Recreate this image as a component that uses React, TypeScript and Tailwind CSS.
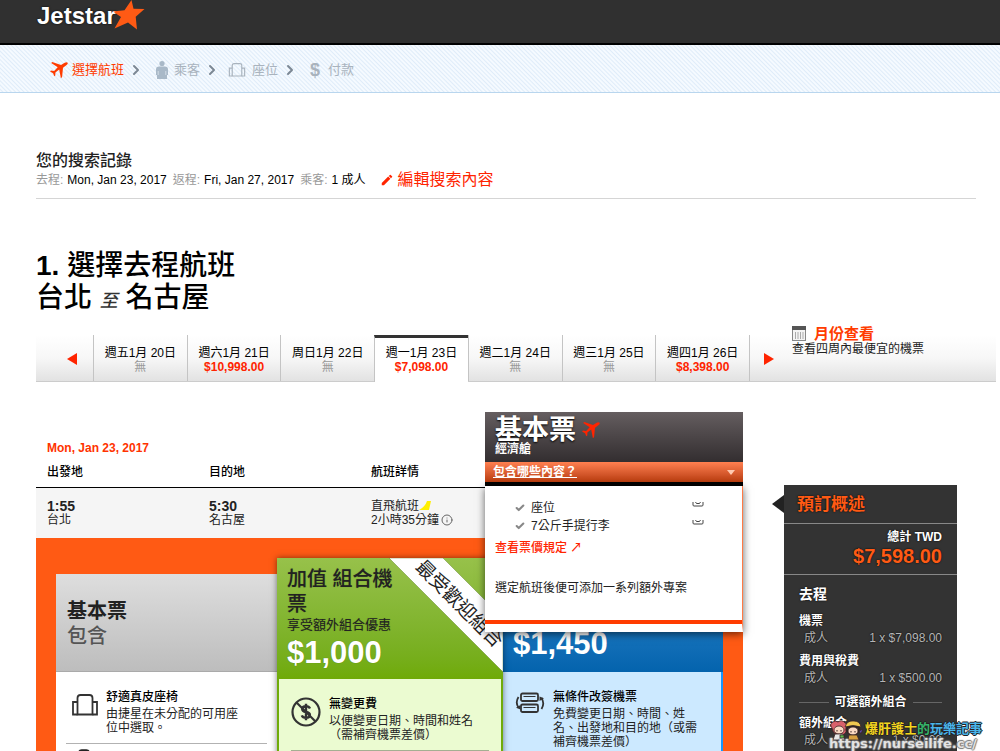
import React from "react";
import { ChevronRight, Info, Check, Briefcase } from "lucide-react";
import { MdEdit } from "react-icons/md";

const days = [
  { label: "週五1月 20日", price: null },
  { label: "週六1月 21日", price: "$10,998.00" },
  { label: "周日1月 22日", price: null },
  { label: "週一1月 23日", price: "$7,098.00", active: true },
  { label: "週二1月 24日", price: null },
  { label: "週三1月 25日", price: null },
  { label: "週四1月 26日", price: "$8,398.00" },
];

const summary = [
  ["去程:", "Mon, Jan 23, 2017"],
  ["返程:", "Fri, Jan 27, 2017"],
  ["乘客:", "1 成人"],
];

function SeatIcon({ className }: { className: string }) {
  return (
    <svg viewBox="0 0 26 22" className={className} fill="none" stroke="currentColor" strokeWidth="1.8">
      <path d="M5.500 20.500V4Q5.500 1 8.500 1h9q3 0 3 3v16.500z" />
      <path d="M5.500 8H1v12.500h4.500M20.500 8H25v12.500h-4.500" />
    </svg>
  );
}

function PersonIcon() {
  return (
    <svg viewBox="0 0 12 18" className="h-[18px] w-3 fill-[#a9b9c8]">
      <circle cx="6" cy="2.600" r="2.600" />
      <path d="M3 5.500h6q3 0 3 3v5.500h-1v4H1v-4H0V8.500q0-3 3-3z" />
      <path d="M2.200 10v4M9.800 10v4" stroke="#eef5fc" strokeWidth=".6" />
    </svg>
  );
}

function PlaneIcon({ className }: { className: string }) {
  return (
    <svg viewBox="0 0 18 18" className={className} fill="currentColor">
      <path d="M17.700 1.800q-1.300-1-3 0L11 4.100 2.200.9 1.200 2l6.500 4.200-3.600 3.700-3.200-.4-.8 1 3 1.700 1.200 3.100 1-.8.1-2.900 3.800-3 1.700 8.700 1.200-1.200.9-9.400 3.300-2.400q1.800-1.400 1.400-2.500z" />
    </svg>
  );
}

function NoFeeIcon() {
  return (
    <svg viewBox="0 0 30 30" className="size-[30px] shrink-0" fill="none" stroke="#333" strokeWidth="2.200">
      <circle cx="15" cy="15" r="13.500" />
      <path d="M5.500 5.500l19 19" />
      <path d="M19 11.500q-1-2.200-4-2.200-3.800 0-3.800 2.700 0 2.400 3.800 3t3.900 3q0 2.800-3.900 2.800-3.300 0-4.200-2.400M15 6.800v16.400" strokeWidth="2.400" />
    </svg>
  );
}

function ChangeIcon() {
  return (
    <svg viewBox="0 0 30 22" className="mt-0.5 h-[22px] w-[30px] shrink-0" fill="none" stroke="#333" strokeWidth="1.800">
      <rect x="6" y="1.500" width="17" height="7.500" rx="1.500" />
      <rect x="6" y="12.500" width="17" height="7.500" rx="1.500" />
      <path d="M8.500 4.500h12M8.500 15.500h12" strokeWidth="1" />
      <path d="M3.500 5Q0 10.500 3.500 15.500M26.500 17Q30 11.500 26.500 6" />
      <path d="M1 15.800l4.500 1.700V13zM29 6.200l-4.500-1.700V9z" fill="#333" stroke="none" />
    </svg>
  );
}

function Step({ icon, label, last, active }: { icon: React.ReactNode; label: string; last?: boolean; active?: boolean }) {
  return (
    <li className="flex items-center">
      <a href="#step" className={active ? "flex items-center gap-0.5 text-[#ff3c00]" : "flex items-center gap-1.5 text-[#a9b3bd]"}>
        {icon}
        <span>{label}</span>
      </a>
      {!last && <ChevronRight className="mx-1 size-4 text-[#7c8894]" strokeWidth={3} />}
    </li>
  );
}

function Feature({ icon, title, narrow, children }: { icon: React.ReactNode; title: string; narrow?: boolean; children: React.ReactNode }) {
  return (
    <li className="flex gap-2 border-b border-black/30 pb-2">
      {icon}
      <div className={narrow ? "pr-5 text-[12px] leading-[14px] text-[#222]" : "text-[12px] leading-[14px] text-[#222]"}>
        <h4 className="mb-0.5 leading-[15px] font-medium text-black">{title}</h4>
        <p>{children}</p>
      </div>
    </li>
  );
}

function FareLine({ title, amount }: { title: string; amount: string }) {
  return (
    <div className="mb-1.5">
      <h4 className="font-bold leading-[14px] text-white">{title}</h4>
      <p className="flex justify-between pl-[5px] leading-5 text-[#b5b5b5]">
        <span>成人</span>
        <span>{amount}</span>
      </p>
    </div>
  );
}

function Tray() {
  return (
    <svg viewBox="0 0 12 6" className="h-1.5 w-3" fill="none" stroke="#444">
      <path d="M1 1v3q0 1 1 1h8q1 0 1-1V1M3.500 1l1 1.500h3l1-1.500" />
    </svg>
  );
}

export default function App() {
  return (
    <div className="relative h-screen overflow-hidden bg-white font-['Liberation_Sans','Noto_Sans_CJK_TC',sans-serif] text-[12px] leading-[14px] text-[#222]">
      <header className="flex h-[45px] items-start border-b-2 border-black bg-[#303030] pl-[37px]">
        <a href="#home" className="flex items-start text-white">
          <span className="pt-1 text-[24px] font-bold leading-6 [text-shadow:0_0_2px_#000]">Jetstar</span>
          <svg viewBox="0 0 33 30" className="-ml-1 h-[30px] w-[33px] fill-[#ff5a14]">
            <path d="M19.500 0l2 8.800 11 .2-8.800 7.700 1.300 12.800-9-7-13.500 6 6.500-11.500L1 11.500l11.500-1.200z" />
          </svg>
        </a>
      </header>

      <nav className="h-12 border-b border-[#b9d6ee] bg-[repeating-linear-gradient(45deg,#f5faff_0px,#f5faff_1px,#dfecf9_2px,#f5faff_3px)] pl-[50px] pt-0.5">
        <ol className="flex h-full items-center text-[13px] leading-4">
          <Step active icon={<PlaneIcon className="mr-0.5 size-[18px]" />} label="選擇航班" />
          <li className="w-2" />
          <Step icon={<PersonIcon />} label="乘客" />
          <li className="w-1" />
          <Step icon={<SeatIcon className="h-3.5 w-[18px]" />} label="座位" />
          <li className="w-2" />
          <Step last icon={<span className="w-3 text-[18px] font-bold">$</span>} label="付款" />
        </ol>
      </nav>

      <main className="pl-9 pr-6 pt-[59px]">
        <section className="border-b border-[#d5d5d5] pb-2">
          <h2 className="text-[16px] font-medium leading-[18px]">您的搜索記錄</h2>
          <div className="flex items-center gap-3.5">
            <dl className="flex gap-1.5 leading-5 text-black">
              {summary.map(([term, value]) => (
                <div key={term} className="flex gap-1">
                  <dt className="text-[#999]">{term}</dt>
                  <dd>{value}</dd>
                </div>
              ))}
            </dl>
            <a href="#edit" className="flex items-center gap-1 text-[16px] leading-5 text-[#ff2400]">
              <MdEdit className="size-3.5" />
              編輯搜索內容
            </a>
          </div>
        </section>

        <h1 className="mt-[51px] text-[28px] font-medium leading-8 text-black">
          <span className="font-bold">1.</span> 選擇去程航班
          <br />
          台北 <em className="text-[18px] text-[#333]">至</em> 名古屋
        </h1>

        <section className="-mr-5 mt-[18px] flex h-[47px] border-b border-[#ccc] bg-linear-to-b from-white via-[#f7f7f7] to-[#e2e2e2]">
          <button aria-label="前一週" className="flex w-[57px] justify-end pr-4 pt-[18px]">
            <svg viewBox="0 0 10 12" className="h-3 w-2.5 fill-[#ff2400]"><path d="M10 0v12L0 6z" /></svg>
          </button>
          <div className="flex w-[657px] border-r border-[#c4c4c4]">
            {days.map((d) => (
              <button
                key={d.label}
                className={
                  d.active
                    ? "-mb-px flex-1 border-l border-t-3 border-l-[#c4c4c4] border-t-[#333] bg-white pb-0.5 pt-0.5"
                    : "flex-1 border-l border-[#c4c4c4] pt-1"
                }
              >
                <span className="block text-black">{d.label}</span>
                {d.price ? <span className="block font-bold text-[#ff2400]">{d.price}</span> : <span className="block text-[#999]">無</span>}
              </button>
            ))}
          </div>
          <button aria-label="後一週" className="w-[42px] pl-3.5 pt-0.5">
            <svg viewBox="0 0 10 12" className="h-3 w-2.5 fill-[#ff2400]"><path d="M0 0v12l10-6z" /></svg>
          </button>
          <div className="-mt-2.5">
            <a href="#month" className="flex items-center gap-2 text-[15px] font-bold leading-[17px] text-[#ff3c00]">
              <svg viewBox="0 0 14 15" className="h-[15px] w-3.5" fill="none">
                <rect x=".5" y=".5" width="13" height="14" fill="#f4f4f4" stroke="#888" />
                <path d="M0 0h14v4H0z" fill="#555" />
                <path d="M3.500 6v7M6 6v7M8.500 6v7M11 6v7" stroke="#aaa" />
              </svg>
              月份查看
            </a>
            <p>查看四周內最便宜的機票</p>
          </div>
        </section>

        <div className="mt-[30px] grid grid-cols-[minmax(0,1fr)_173px] gap-[41px] pr-[19px]">
          <section>
            <div className="grid grid-cols-[minmax(0,1fr)_258px]">
              <div className="pt-[29px]">
                <h3 className="pl-[11px] font-bold text-[#ff3300]">Mon, Jan 23, 2017</h3>
                <table className="mt-1 w-full table-fixed text-left">
                  <thead>
                    <tr className="h-7 border-b border-black text-black">
                      <th className="pb-0.5 pl-[11px] font-medium">出發地</th>
                      <th className="pb-0.5 pl-[11px] font-medium">目的地</th>
                      <th className="w-[125px] pb-0.5 pl-[11px] font-medium">航班詳情</th>
                    </tr>
                  </thead>
                  <tbody>
                    <tr className="h-[51px] bg-[#f5f5f5]">
                      <td className="pl-[11px]"><b className="block text-[14px]">1:55</b>台北</td>
                      <td className="pl-[11px]"><b className="block text-[14px]">5:30</b>名古屋</td>
                      <td className="pl-[11px]">
                        <span className="flex items-center">
                          直飛航班
                          <svg viewBox="0 0 12 9" className="h-[9px] w-3 fill-[#ffef00]"><path d="M0 9Q6 6 8 0h4l-2 9z" /></svg>
                        </span>
                        <span className="flex items-center gap-0.5">2小時35分鐘 <Info className="size-3 text-[#666]" /></span>
                      </td>
                    </tr>
                  </tbody>
                </table>
              </div>

              <div className="relative z-10">
                <div className="h-[50px] bg-linear-to-b from-[#655e60] to-[#332e30] px-2.5 pt-1 text-white">
                  <h3 className="flex items-center gap-1.5 text-[27px] font-bold leading-7 [text-shadow:0_1px_2px_#000]">
                    基本票 <PlaneIcon className="size-[18px] text-[#ff2400]" />
                  </h3>
                  <p className="font-bold leading-[10px]">經濟艙</p>
                </div>
                <button className="flex h-5 w-full items-center justify-between bg-linear-to-b from-[#ff8050] to-[#b83c0c] px-2 text-left font-bold text-white underline">
                  包含哪些內容？
                  <svg viewBox="0 0 8 5" className="h-[5px] w-2 fill-[#ffc9b0]"><path d="M0 0h8L4 5z" /></svg>
                </button>
                <div className="h-1 bg-black" />
                <div className="absolute inset-x-0 top-[74px] border-b-8 border-r border-b-white border-r-[#ff7a45] bg-white shadow-[0_2px_8px_rgba(0,0,0,0.6)]">
                  <div className="h-[138px] border-b-4 border-[#ff3c00] px-2.5 pt-[13px]">
                    <ul className="pl-5">
                      {["座位", "7公斤手提行李"].map((t) => (
                        <li key={t} className="flex h-[18px] items-center gap-1.5">
                          <Check className="size-2.5 text-[#888]" strokeWidth={5} />
                          <span className="flex-1">{t}</span>
                          <span className="mb-2 mr-7"><Tray /></span>
                        </li>
                      ))}
                    </ul>
                    <a href="#rules" className="mt-1.5 block font-medium text-[#ff2400]">查看票價規定 ↗</a>
                    <p className="mt-[26px]">選定航班後便可添加一系列額外專案</p>
                  </div>
                </div>
              </div>
            </div>

            <div className="flex min-h-[260px] bg-[#ff5a14] px-5 pt-5">
              <article className="mt-4 w-[221px] bg-white">
                <header className="h-[98px] border-b border-[#aaa] bg-linear-to-b from-[#dedede] to-[#bdbdbd] pl-[11px] pt-[25px] text-[20px] leading-[25px]">
                  <h3 className="font-bold text-[#222]">基本票</h3>
                  <p className="font-medium text-[#555]">包含</p>
                </header>
                <ul className="space-y-5 px-2.5 pt-[18px]">
                  <Feature narrow icon={<SeatIcon className="ml-1.5 mt-1 h-[22px] w-[26px] shrink-0 text-[#333]" />} title="舒適真皮座椅">由捷星在未分配的可用座位中選取。</Feature>
                  <Feature icon={<Briefcase className="-mt-4 ml-1 size-7 shrink-0" />} title="7公斤手提行李">包含</Feature>
                </ul>
              </article>

              <article className="relative w-[226px] bg-[#70ab09] pb-1 shadow-[0_0_6px_rgba(0,0,0,0.5)]">
                <header className="relative h-[121px] overflow-hidden bg-linear-to-b from-[#97c14a] to-[#6faa06] px-2.5 pt-[9px] [text-shadow:0_0_1px_rgba(0,0,0,0.3)]">
                  <svg viewBox="0 0 226 121" className="absolute left-0 top-0 h-[121px] w-[226px]">
                    <path d="M112 0h54l60 60v54z" fill="#fff" stroke="#4b7410" strokeOpacity=".4" />
                  </svg>
                  <h3 className="w-[110px] text-[20px] font-medium leading-[25px] text-[#222]">加值 組合機票</h3>
                  <p className="text-[13px] leading-4 text-[#222]">享受額外組合優惠</p>
                  <p className="mt-1 text-[31px] font-bold leading-8 text-white">$1,000</p>
                </header>
                <p className="absolute left-[125px] top-[36px] w-[114px] rotate-45 whitespace-nowrap text-[19px] leading-5 text-[#222]">最受歡迎組合</p>
                <ul className="mx-0.5 h-40 space-y-1 bg-[#ebfbd1] px-3 pt-[18px]">
                  <Feature icon={<NoFeeIcon />} title="無變更費">以便變更日期、時間和姓名（需補齊機票差價）</Feature>
                </ul>
              </article>

              <article className="mt-4 w-[220px] bg-[#cce9ff]">
                <header className="h-[98px] bg-linear-to-b from-[#2a8ad0] to-[#0463ad] pl-2.5 pt-[54px] text-[31px] font-bold leading-8 text-white">
                  $1,450
                </header>
                <ul className="h-40 border-r-2 border-[#1596ff] pl-3 pr-4 pt-[18px]">
                  <Feature icon={<ChangeIcon />} title="無條件改簽機票">免費變更日期、時間、姓名、出發地和目的地（或需補齊機票差價）</Feature>
                </ul>
              </article>
            </div>
          </section>

          <aside className="relative mt-[73px] bg-[#333] [text-shadow:0_0_2px_#000]">
            <svg viewBox="0 0 12 18" className="absolute -left-3 top-2.5 h-[18px] w-3 fill-[#222]"><path d="M12 0v18L0 9z" /></svg>
            <h2 className="h-[39px] border-b border-[#888] pl-[13px] text-[17px] font-bold leading-[40px] text-[#ff5a14]">預訂概述</h2>
            <div className="h-[51px] border-b border-[#888] pr-[15px] pt-1.5 text-right font-bold text-white">
              <p>總計 TWD</p>
              <p className="text-[20px] leading-6 text-[#ff5a14]">$7,598.00</p>
            </div>
            <div className="px-[15px] pt-[9px]">
              <h3 className="mb-2.5 text-[14px] font-bold leading-5 text-white">去程</h3>
              <FareLine title="機票" amount="1 x $7,098.00" />
              <FareLine title="費用與稅費" amount="1 x $500.00" />
              <h3 className="mb-1.5 flex items-center gap-1.5 font-bold leading-4 text-white">
                <span className="h-px flex-1 bg-[#666]" />可選額外組合<span className="h-px flex-1 bg-[#666]" />
              </h3>
              <FareLine title="額外組合" amount="1 x $0.00" />
            </div>
          </aside>
        </div>
      </main>

      <div className="absolute bottom-0 right-3.5 z-20 w-[157px]">
        <div className="flex items-end">
          <svg viewBox="0 0 34 22" className="h-[22px] w-[34px] shrink-0" stroke="#3a2525" strokeWidth=".8">
            <path d="M3 9Q0 5 4 3q2-2 5 0 4-3 7 1 4 1 1 6 1 6-6 6T3 9z" fill="#d9616b" />
            <ellipse cx="10" cy="11" rx="5" ry="4" fill="#fbd9c3" />
            <path d="M6 15h8l2 6H4z" fill="#e8e8e8" />
            <path d="M11 16h4v3h-4z" fill="#5fbf4f" />
            <ellipse cx="24" cy="10" rx="7" ry="6" fill="#2d2524" />
            <ellipse cx="24" cy="12" rx="5" ry="4" fill="#fbd9c3" />
            <path d="M16 8q2-7 9-6 6 0 7 6-8-3-16 0z" fill="#f0c850" />
            <path d="M20 16h8l2 5H19z" fill="#d8a040" />
            <path d="M30 12l4-2-2 5z" fill="#5a4aa8" />
            <path d="M8 11v1.500M12 11v1.500M22 12v1.500M26 12v1.500" strokeWidth="1" />
          </svg>
          <p className="ml-0.5 whitespace-nowrap pb-1 text-[13px] font-bold leading-4 text-[#f5d51e] [text-shadow:1px_0_0_#222,-1px_0_0_#222,0_1px_0_#222,0_-1px_0_#222]">
            爆肝護士<span className="text-[#35b56a]">的</span><span className="text-[#49b4ea]">玩樂記事</span>
          </p>
        </div>
        <p className="-mt-1 font-['DejaVu_Sans',sans-serif] text-[13px] font-bold leading-[14px] text-white/80 [text-shadow:1px_0_1px_#777,-1px_0_1px_#777,0_1px_1px_#777,0_-1px_1px_#777]">
          https://nurseilife.cc/
        </p>
      </div>
    </div>
  );
}
